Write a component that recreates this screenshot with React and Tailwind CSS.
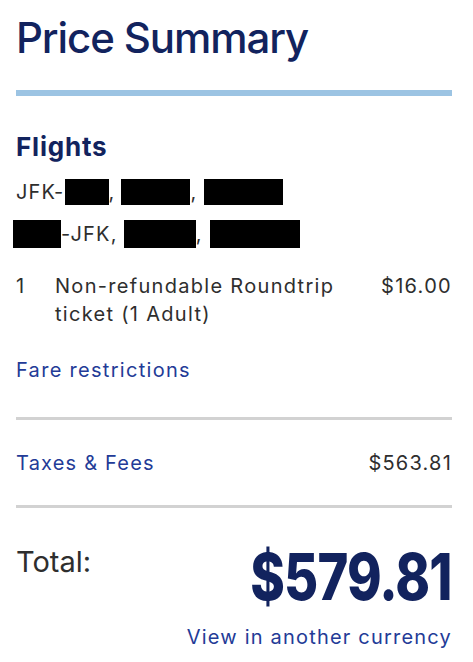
export default function App() {
  return (
    <div className="w-[473px] h-[662px] bg-white px-4 font-['Inter',sans-serif] text-[#2e2e2e]">
      <h1 className="pt-[14px] text-[42px] leading-[48px] font-medium tracking-[-1.1px] text-[#12235e]">Price Summary</h1>
      <div className="mt-[28px] h-[6px] w-[436px] bg-[#9cc4e3]"></div>
      <h2 className="mt-[35px] text-[26px] leading-[32px] font-bold tracking-[0.8px] text-[#12235e]">Flights</h2>
      <div className="mt-[16px] flex items-center h-[26px] text-[20px] leading-[26px] tracking-[1.2px]">
        <span>JFK-</span>
        <span className="inline-block h-[26px] w-[44px] bg-black"></span>
        <span>,</span>
        <span className="ml-[6px] inline-block h-[26px] w-[69px] bg-black"></span>
        <span>,</span>
        <span className="ml-[7px] inline-block h-[26px] w-[79px] bg-black"></span>
      </div>
      <div className="mt-[15px] -ml-[3px] flex items-center h-[28px] text-[20px] leading-[28px] tracking-[1.2px]">
        <span className="inline-block h-[28px] w-[48px] bg-black"></span>
        <span>-JFK,</span>
        <span className="ml-[6px] inline-block h-[28px] w-[72px] bg-black"></span>
        <span>,</span>
        <span className="ml-[7px] inline-block h-[28px] w-[90px] bg-black"></span>
      </div>
      <div className="mt-[24px] flex w-[436px] text-[20px] leading-[28px] tracking-[1.3px]">
        <span className="w-[39px] shrink-0">1</span>
        <span className="w-[305px]">Non-refundable Roundtrip ticket (1 Adult)</span>
        <span className="ml-auto">$16.00</span>
      </div>
      <div className="mt-[28px] text-[20px] leading-[28px] tracking-[1.3px] text-[#233b97]">Fare restrictions</div>
      <div className="mt-[33px] h-[3px] w-[436px] bg-[#d2d2d2]"></div>
      <div className="mt-[29px] flex w-[436px] text-[20px] leading-[28px] tracking-[1.2px]">
        <span className="text-[#233b97]">Taxes &amp; Fees</span>
        <span className="ml-auto">$563.81</span>
      </div>
      <div className="mt-[28px] h-[3px] w-[436px] bg-[#d2d2d2]"></div>
      <div className="mt-[34px] flex w-[436px] items-start h-[70px]">
        <span className="pt-[3px] text-[29px] leading-[34px]">Total:</span>
        <span className="ml-auto origin-right scale-x-[0.82] text-[64px] leading-[70px] font-extrabold tracking-[-1px] text-[#12235e]">$579.81</span>
      </div>
      <div className="mt-[11px] w-[436px] text-right text-[20px] leading-[28px] tracking-[1.2px] text-[#233b97]">View in another currency</div>
    </div>
  );
}
